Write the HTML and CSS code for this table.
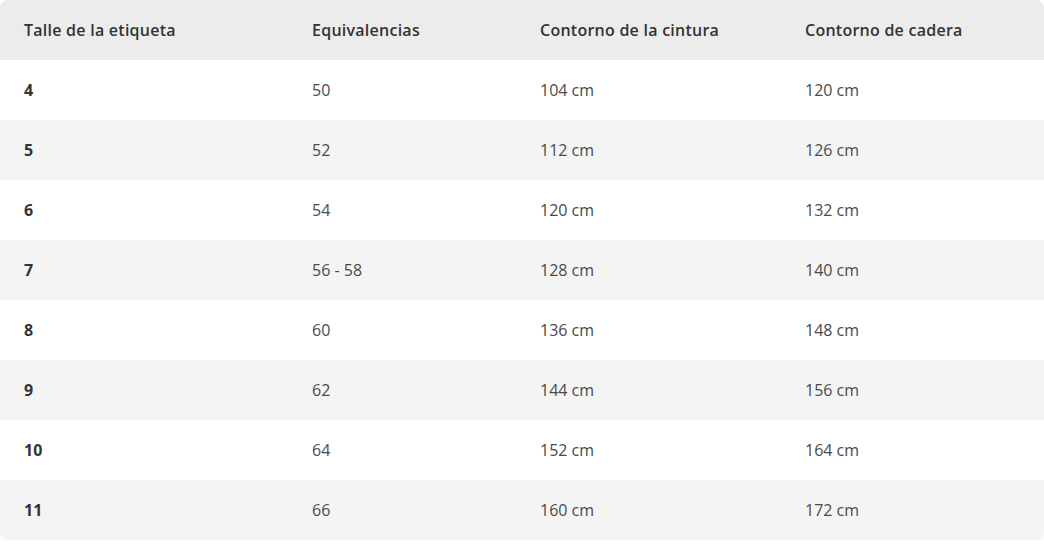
FILE: index.html
```html
<!DOCTYPE html>
<html lang="es">
<head>
<meta charset="utf-8">
<title>Tabla de talles</title>
<link rel="stylesheet" href="styles.css">
</head>
<body>
<table class="size-table">
  <colgroup>
    <col class="c1"><col class="c2"><col class="c3"><col class="c4">
  </colgroup>
  <thead>
    <tr><th>Talle de la etiqueta</th><th>Equivalencias</th><th>Contorno de la cintura</th><th>Contorno de cadera</th></tr>
  </thead>
  <tbody>
    <tr><td class="size">4</td><td>50</td><td>104 cm</td><td>120 cm</td></tr>
    <tr><td class="size">5</td><td>52</td><td>112 cm</td><td>126 cm</td></tr>
    <tr><td class="size">6</td><td>54</td><td>120 cm</td><td>132 cm</td></tr>
    <tr><td class="size">7</td><td>56 - 58</td><td>128 cm</td><td>140 cm</td></tr>
    <tr><td class="size">8</td><td>60</td><td>136 cm</td><td>148 cm</td></tr>
    <tr><td class="size">9</td><td>62</td><td>144 cm</td><td>156 cm</td></tr>
    <tr><td class="size">10</td><td>64</td><td>152 cm</td><td>164 cm</td></tr>
    <tr><td class="size">11</td><td>66</td><td>160 cm</td><td>172 cm</td></tr>
  </tbody>
</table>
</body>
</html>
```
FILE: styles.css
```css
html, body { margin: 0; padding: 0; background: #fff; }
body { font-family: "Open Sans", "Liberation Sans", sans-serif; font-size: 16px; color: #4a4a4a; }
.size-table {
  width: 1044px;
  border-collapse: separate;
  border-spacing: 0;
  table-layout: fixed;
  border-radius: 8px;
  overflow: hidden;
}
.c1 { width: 288px; }
.c2 { width: 228px; }
.c3 { width: 265px; }
.c4 { width: 263px; }
.size-table th, .size-table td {
  height: 60px;
  padding: 0 0 0 24px;
  text-align: left;
  vertical-align: middle;
  box-sizing: border-box;
}
.size-table th { background: #ececec; color: #333; font-weight: 600; letter-spacing: 0.25px; }
.size-table tbody tr:nth-child(odd) td { background: #fff; }
.size-table tbody tr:nth-child(even) td { background: #f4f4f4; }
.size-table td.size { font-weight: 700; color: #333; }
```
